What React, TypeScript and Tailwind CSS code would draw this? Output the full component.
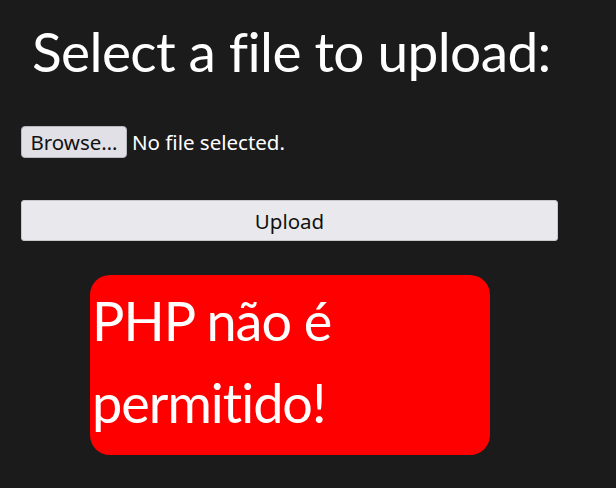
import React from "react";

export default function App() {
  return (
    <div
      className="w-[616px] h-[488px] bg-[#1c1b1c] text-white overflow-hidden"
      style={{ fontFamily: '"Noto Sans", sans-serif' }}
    >
      <div className="pt-[19px] pl-[32px]" style={{ fontFamily: 'Lato, sans-serif' }}>
        <h1 className="text-[55px] leading-[64px] font-normal whitespace-nowrap tracking-[-0.6px] [font-variant-ligatures:none]">
          Select a file to upload:
        </h1>
      </div>
      <div className="pl-[21px] mt-[43px] flex items-center h-[32px]">
        <button className="h-[32px] w-[106px] bg-[#e0e0e6] text-[#111] text-[20.5px] rounded-[4px] border border-[#b8b8c0] flex items-center justify-center">
          Browse…
        </button>
        <span className="ml-[5px] text-[20.5px]">No file selected.</span>
      </div>
      <div className="pl-[21px] mt-[42px]">
        <button className="w-[537px] h-[41px] bg-[#e9e9ed] text-[#111] text-[20.5px] rounded-[3px] border border-[#c8c8cc] flex items-center justify-center pt-[2px]">
          Upload
        </button>
      </div>
      <div className="ml-[90px] mt-[34px] w-[400px] h-[180px] bg-[#ff0000] rounded-[20px] overflow-hidden">
        <p
          className="text-[54px] leading-[82px] pl-[2px] pt-[5px] tracking-[-1px] [font-variant-ligatures:none]"
          style={{ fontFamily: 'Lato, sans-serif' }}
        >
          PHP não é permitido!
        </p>
      </div>
    </div>
  );
}
